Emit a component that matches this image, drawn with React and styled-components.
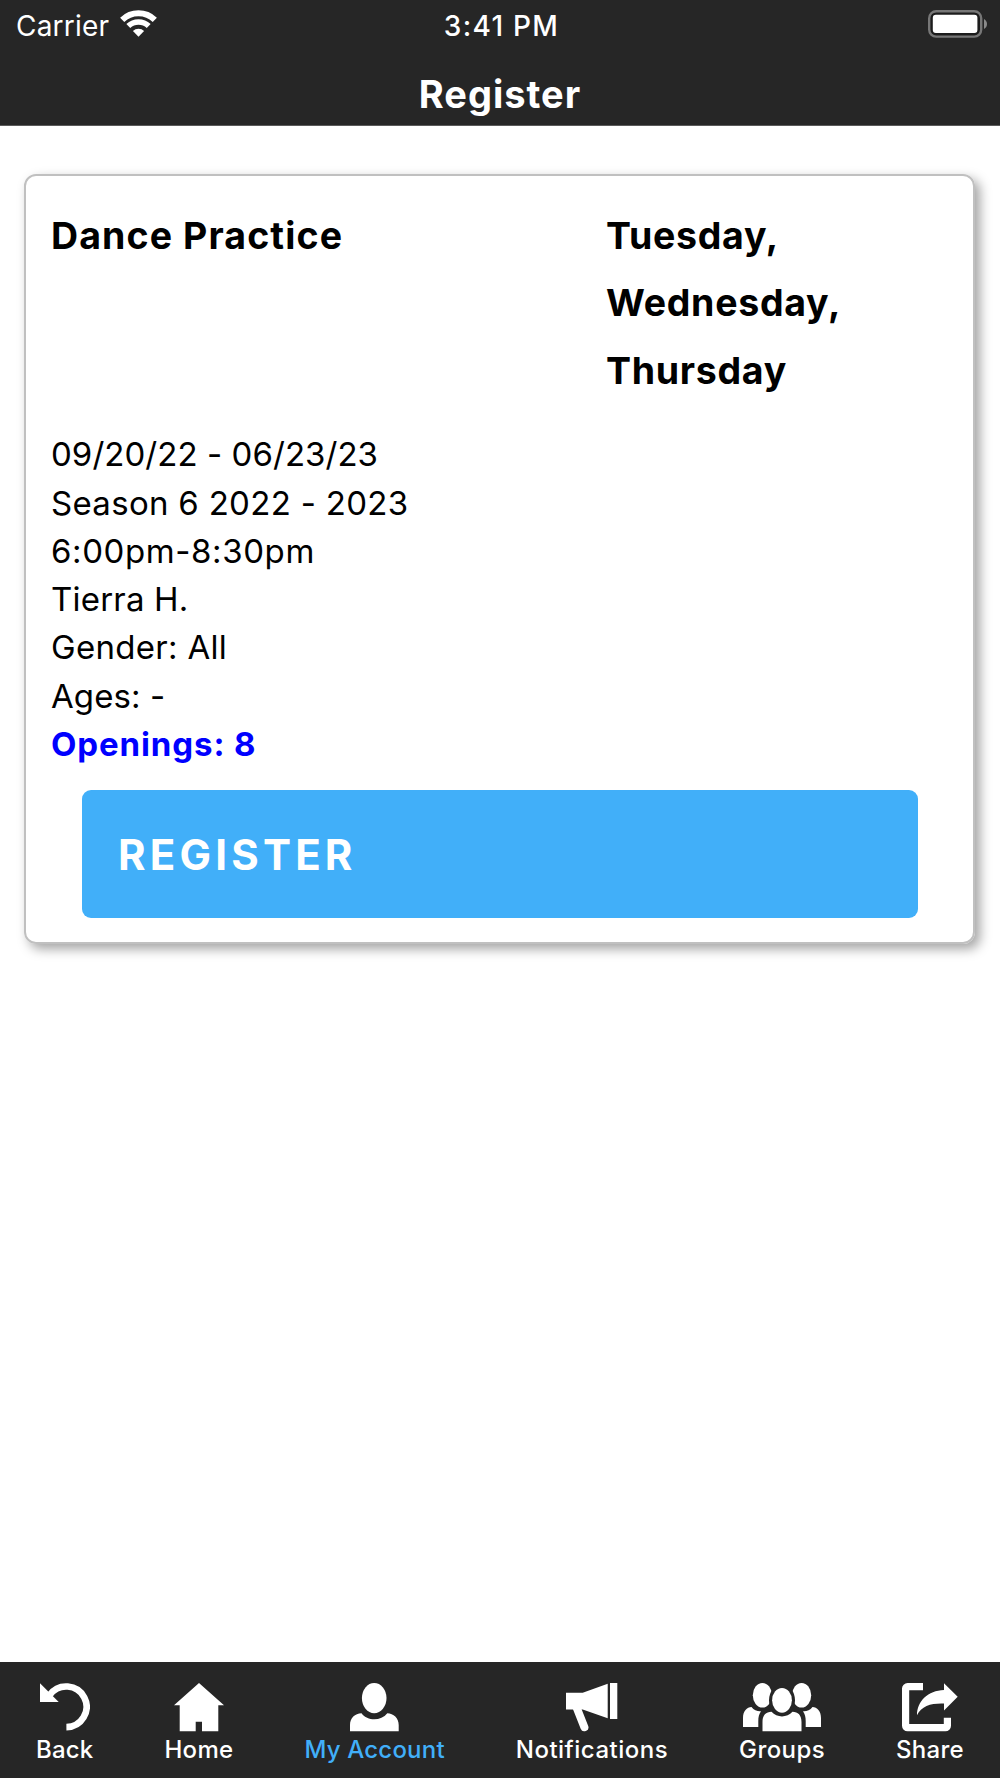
import React from 'react';
import styled, {createGlobalStyle} from 'styled-components';

const BAR_COLOR = '#262626';
const HIGHLIGHT_COLOR = '#41aff9';

const GlobalStyle = createGlobalStyle`
	* {
		box-sizing: border-box;
	}
	body {
		margin: 0;
		background: #fff;
		color: #000;
		font-family: Inter, 'Liberation Sans', sans-serif;
	}
`;

const Screen = styled.div`
	display: flex;
	flex-direction: column;
	height: 1778px;
	overflow: hidden;
`;

const Header = styled.header`
	height: 126px;
	border-bottom: 1px solid #5a5a5a;
	background: ${BAR_COLOR};
	color: #fff;
`;

const StatusBar = styled.div`
	display: grid;
	grid-template-columns: 1fr auto 1fr;
	height: 48px;
	padding: 0 13px 0 16px;
	line-height: 52px;
	font-size: 28px;
`;

const Carrier = styled.div`
	display: flex;
	gap: 11px;
	letter-spacing: 0.2px;
	svg {
		margin-top: 10px;
	}
`;

const Clock = styled.div`
	font-weight: 500;
	letter-spacing: 1.3px;
`;

const BatterySlot = styled.div`
	display: flex;
	justify-content: flex-end;
	padding-top: 10px;
`;

const PageTitle = styled.h1`
	margin: 0;
	text-align: center;
	font-size: 38px;
	font-weight: 700;
	line-height: 92px;
	letter-spacing: 1px;
`;

const Main = styled.main`
	flex: 1;
	padding: 48px 25px 0 24px;
`;

const Card = styled.section`
	height: 770px;
	padding: 26px 25px 0;
	border: 2px solid #c0c0c0;
	border-radius: 12px;
	box-shadow: 5px 5px 12px rgba(0, 0, 0, 0.36);
`;

const CardHead = styled.div`
	display: grid;
	grid-template-columns: 555px 1fr;
	height: 228.3px;
	font-size: 37.5px;
	font-weight: 700;
	line-height: 67.4px;
`;

const ClassName = styled.div`
	letter-spacing: 1.1px;
`;

const ClassDays = styled.div`
	letter-spacing: 0.7px;
`;

const Details = styled.ul`
	margin: 0;
	padding: 0;
	list-style: none;
	font-size: 33px;
	line-height: 48.3px;
`;

const Detail = styled.li`
	letter-spacing: ${({$tracking}) => $tracking}px;
`;

const Openings = styled.li`
	color: #00f;
	font-weight: 700;
	letter-spacing: 0.9px;
`;

const RegisterButton = styled.button`
	display: block;
	width: 836px;
	height: 128px;
	margin: 21.7px 0 0 31px;
	padding: 0 36px;
	border: 0;
	border-radius: 9px;
	background: ${HIGHLIGHT_COLOR};
	color: #fff;
	font: 700 42px Inter, sans-serif;
	letter-spacing: 4.2px;
	text-align: left;
`;

const TabBar = styled.nav`
	display: flex;
	justify-content: space-between;
	height: 116px;
	padding: 21px 36px 0;
	background: ${BAR_COLOR};
`;

const TabItem = styled.a`
	display: flex;
	flex-direction: column;
	align-items: center;
	color: ${({$active}) => ($active ? HIGHLIGHT_COLOR : '#fff')};
	font-size: 24px;
	font-weight: 550;
	line-height: 36px;
	letter-spacing: ${({$tracking}) => $tracking}px;
	svg {
		display: block;
		flex-shrink: 0;
		color: #fff;
	}
`;

const WifiIcon = () => (
	<svg width='37' height='27' fill='none' stroke='#fff'>
		<path d='M2.2 9.8A23.5 23.5 0 0 1 34.8 9.8' strokeWidth='6' />
		<path d='M8.3 16.1A14.7 14.7 0 0 1 28.7 16.1' strokeWidth='5.6' />
		<path d='M18.5 26.7L12.9 21A8 8 0 0 1 24.1 21Z' fill='#fff' stroke='none' />
	</svg>
);

const BatteryIcon = () => (
	<svg width='59' height='28'>
		<rect x='1.2' y='1.2' width='52' height='25.4' rx='7' fill='#1c1c1c' stroke='#777' strokeWidth='2.4' />
		<rect x='4.8' y='4.8' width='44.6' height='18.3' rx='3' fill='#fff' />
		<path d='M56 9C60 11 60 17 56 19Z' fill='#8a8a8a' />
	</svg>
);

const BackIcon = () => (
	<svg width='50' height='49' fill='currentColor'>
		<path d='M0 .3L18.7 19H0Z' />
		<path
			d='M9.8 11.9A20.3 20.3 0 1 1 26.4 44.1'
			fill='none'
			stroke='currentColor'
			strokeWidth='6.6'
		/>
	</svg>
);

const HomeIcon = () => (
	<svg width='50' height='49' fill='currentColor'>
		<path d='M25 0L50 22.3H44.3V48.3H28V38.7H21.7V48.3H5.7V22.3H0Z' />
	</svg>
);

const AccountIcon = () => (
	<svg width='49' height='49' fill='currentColor'>
		<ellipse cx='24.2' cy='15.1' rx='12.3' ry='15.1' />
		<path d='M0 48.3V42C0 35 5 30.5 11.5 30.3C17.5 38.3 31 38.3 37.3 30.3C43.5 30.5 48.7 35 48.7 42V48.3Z' />
	</svg>
);

const MegaphoneIcon = () => (
	<svg width='52' height='49' fill='currentColor'>
		<path d='M0 9.7H16.7L41.7 .7V35.3L16.7 26.5H0Z' />
		<rect x='44' width='7.3' height='36' />
		<path d='M10.8 25L18.4 44.2' stroke='currentColor' strokeWidth='8' strokeLinecap='round' />
	</svg>
);

const GroupsIcon = () => (
	<svg width='78' height='49' fill='currentColor'>
		<ellipse cx='19.4' cy='12.3' rx='9.6' ry='12.3' />
		<ellipse cx='58.6' cy='12.3' rx='9.6' ry='12.3' />
		<ellipse cx='39' cy='17.3' rx='13' ry='15.6' fill={BAR_COLOR} />
		<ellipse cx='39' cy='17.3' rx='9.9' ry='12.4' />
		<path d='M19.5 48.3V39C19.5 32 23 29 28.5 28.8C34 35 44 35 49.5 28.8C55 29 58.5 32 58.5 39V48.3Z' />
		<path d='M0 44V35C0 28 4 24.2 8.5 24C11 27.3 14.5 28.5 18 28.2C16 31 15.3 34 15.3 38V44Z' />
		<path d='M78 44V35C78 28 74 24.2 69.5 24C67 27.3 63.5 28.5 60 28.2C62 31 62.7 34 62.7 38V44Z' />
	</svg>
);

const ShareIcon = () => (
	<svg width='56' height='49' fill='currentColor'>
		<path
			d='M21 3.6H5.6a2 2 0 0 0-2 2V42.7a2 2 0 0 0 2 2H43.4a2 2 0 0 0 2-2V34.7'
			fill='none'
			stroke='currentColor'
			strokeWidth='7.2'
		/>
		<path d='M42 .3L55.7 13.7L42 27.5V20.5C30 20 19.5 22.5 15 32.3C15 18 26 7.5 42 7Z' />
	</svg>
);

const TABS = [
	{label: 'Back', Icon: BackIcon, tracking: 0.2},
	{label: 'Home', Icon: HomeIcon, tracking: 0.3},
	{label: 'My Account', Icon: AccountIcon, tracking: 0.2, active: true},
	{label: 'Notifications', Icon: MegaphoneIcon, tracking: 0.5},
	{label: 'Groups', Icon: GroupsIcon, tracking: 0.4},
	{label: 'Share', Icon: ShareIcon, tracking: 0.3},
];

const DETAILS = [
	{text: '09/20/22 - 06/23/23', tracking: 0.05},
	{text: 'Season 6 2022 - 2023', tracking: 0.3},
	{text: '6:00pm-8:30pm', tracking: 0.6},
	{text: 'Tierra H.', tracking: 0.2},
	{text: 'Gender: All', tracking: 0.3},
	{text: 'Ages: -', tracking: 0.1},
];

const App = () => (
	<Screen>
		<GlobalStyle />
		<Header>
			<StatusBar>
				<Carrier>
					<span>Carrier</span>
					<WifiIcon />
				</Carrier>
				<Clock>3:41 PM</Clock>
				<BatterySlot>
					<BatteryIcon />
				</BatterySlot>
			</StatusBar>
			<PageTitle>Register</PageTitle>
		</Header>
		<Main>
			<Card>
				<CardHead>
					<ClassName>Dance Practice</ClassName>
					<ClassDays>
						Tuesday,
						<br />
						Wednesday,
						<br />
						Thursday
					</ClassDays>
				</CardHead>
				<Details>
					{DETAILS.map(({text, tracking}) => (
						<Detail key={text} $tracking={tracking}>
							{text}
						</Detail>
					))}
					<Openings>Openings: 8</Openings>
				</Details>
				<RegisterButton>REGISTER</RegisterButton>
			</Card>
		</Main>
		<TabBar>
			{TABS.map(({label, Icon, tracking, active}) => (
				<TabItem key={label} $active={active} $tracking={tracking}>
					<Icon />
					{label}
				</TabItem>
			))}
		</TabBar>
	</Screen>
);

export default App;
